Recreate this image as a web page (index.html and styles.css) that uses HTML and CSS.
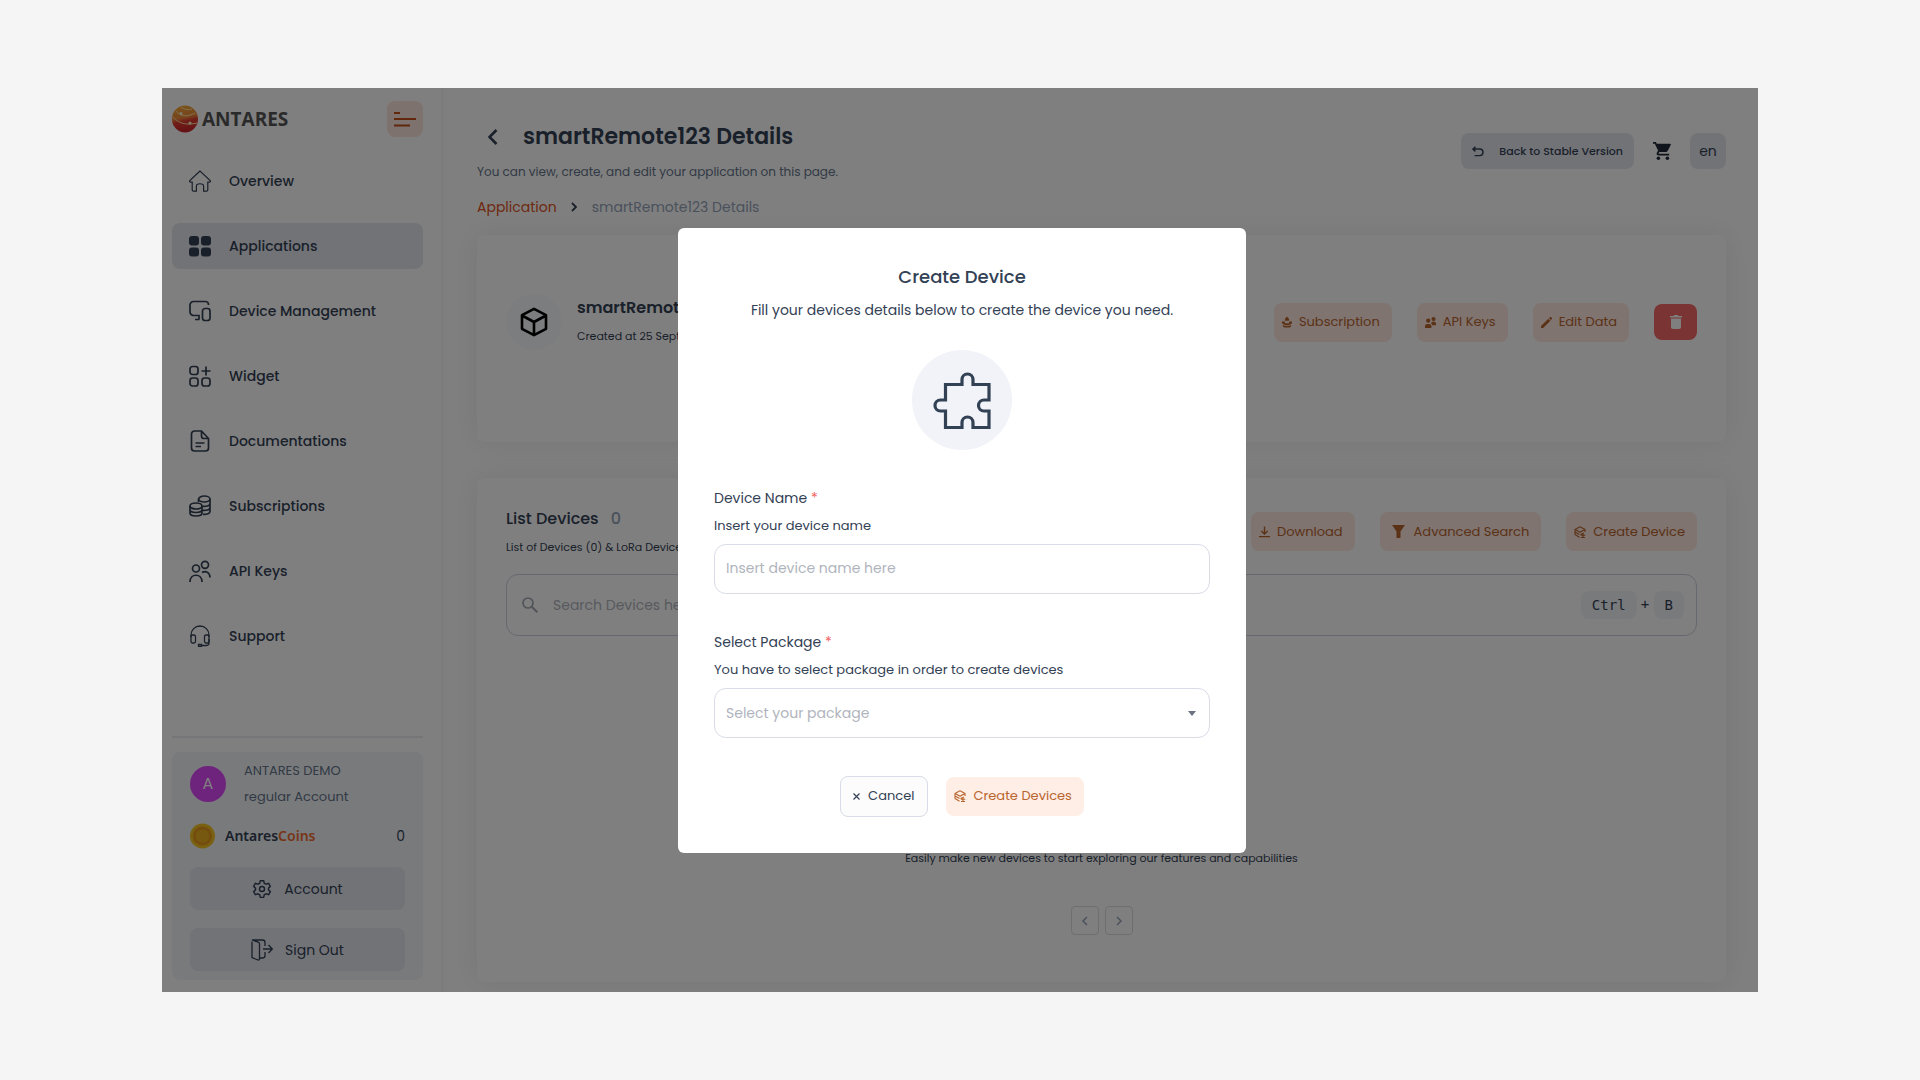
FILE: index.html
```html
<!DOCTYPE html>
<html lang="en">
<head>
    <meta charset="UTF-8">
    <meta name="viewport" content="width=device-width, initial-scale=1.0">
    <title>smartRemote123 Details</title>
    <link rel="stylesheet" href="styles.css">
</head>
<body>
    <!-- shared by both create buttons -->
    <svg width="0" height="0" class="symbols" aria-hidden="true">
        <symbol id="layers" viewBox="0 0 24 24">
            <path fill="none" stroke="currentColor" stroke-width="2.2" stroke-linejoin="round" d="M12 1.500 22 7v5M12 1.500 2 7l10 5.500L22 7M2 7v5l9 5M2 12v5l9 5.500M7 9.500l5 3 5-3M13 17l7-3M18 14v9M13.500 18.500h9M14 23l8 0"/>
        </symbol>
    </svg>

    <div class="app">
        <aside class="sidebar">
            <div class="sidebar-header">
                <div class="brand">
                    <svg width="26" height="28" viewBox="0 0 26 28">
                        <defs>
                            <linearGradient id="sphere" x1="0.300" y1="0" x2="0.500" y2="1">
                                <stop offset="0" stop-color="#f5a834"/>
                                <stop offset="0.450" stop-color="#f08a3c"/>
                                <stop offset="0.600" stop-color="#e03a30"/>
                                <stop offset="1" stop-color="#c8232c"/>
                            </linearGradient>
                        </defs>
                        <ellipse cx="13" cy="14" rx="13" ry="13.500" fill="url(#sphere)"/>
                        <path d="M4 6c5 6 12 6 19 2M1 12c7 8 16 8 24 6M9 2c3 3 8 3 11 2" fill="none" stroke="#ffe3a0" stroke-width="1"/>
                        <circle cx="9" cy="8.500" r="1.600" fill="#fff3c8"/>
                        <circle cx="18" cy="18" r="1.600" fill="#fff3c8"/>
                    </svg>
                    <span>ANTARES</span>
                </div>
                <button class="menu-btn" aria-label="Toggle menu">
                    <svg width="22" height="16" viewBox="0 0 22 16"><path d="M0 2h6M0 8h22M0 14.500h16" stroke="currentColor" stroke-width="2"/></svg>
                </button>
            </div>

            <nav class="nav">
                <a href="#" class="nav-item">
                    <svg width="22" height="22" viewBox="0 0 22 22"><path d="M11 1 .8 10.600c-.5.800 0 1.600 1 1.600h1.400V20c0 .8.400 1.200 1.200 1.200h3V16c0-3 7.200-3 7.200 0v5.200h3c.8 0 1.200-.4 1.200-1.200v-7.800h1.400c1 0 1.500-.8 1-1.600z" stroke-width="1.200"/></svg>
                    Overview
                </a>
                <a href="#" class="nav-item active">
                    <svg width="22" height="22" viewBox="0 0 22 22"><g fill="currentColor" stroke="none"><rect y="1" width="10" height="9.500" rx="3"/><rect x="12" y="1" width="10" height="9.500" rx="3"/><rect y="12.500" width="10" height="9" rx="3"/><rect x="12" y="12.500" width="10" height="9" rx="3"/></g></svg>
                    Applications
                </a>
                <a href="#" class="nav-item">
                    <svg width="22" height="22" viewBox="0 0 22 22"><path d="M19.500 5V4.500a3 3 0 0 0-3-3h-12A3.500 3.500 0 0 0 1 5v7a3.500 3.500 0 0 0 3.500 3.500H10v4M6 19.500h4.500"/><rect x="13.500" y="8.500" width="7.500" height="12" rx="2.500"/></svg>
                    Device Management
                </a>
                <a href="#" class="nav-item">
                    <svg width="22" height="22" viewBox="0 0 22 22"><rect x="1" y="1.500" width="8" height="8" rx="2.500"/><rect x="1" y="13" width="8" height="8" rx="2.500"/><rect x="13" y="13" width="8" height="8" rx="2.500"/><path d="M17 1.500v9M12.500 6h9"/></svg>
                    Widget
                </a>
                <a href="#" class="nav-item">
                    <svg width="22" height="22" viewBox="0 0 22 22"><path d="M12.500 1H5.500A3 3 0 0 0 2.500 4v14a3 3 0 0 0 3 3h11a3 3 0 0 0 3-3V8.500zM12.500 1v5a2.500 2.500 0 0 0 2.500 2.500h4.500M6.500 13h9M6.500 16.500h5.500"/></svg>
                    Documentations
                </a>
                <a href="#" class="nav-item">
                    <svg width="22" height="22" viewBox="0 0 22 22"><ellipse cx="7" cy="11" rx="6" ry="3"/><path d="M1 11v7c0 4 12 4 12 0v-7M1 14.500c0 4 12 4 12 0M9.500 7V4M21 4v12.500c0 2-3 3-7 2.800M21 8.500c0 2.500-4 3.300-8 2.800M21 12.500c0 2.500-4 3.300-8 2.800"/><ellipse cx="15.300" cy="4" rx="5.700" ry="3"/></svg>
                    Subscriptions
                </a>
                <a href="#" class="nav-item">
                    <svg width="22" height="22" viewBox="0 0 22 22"><circle cx="7" cy="8.500" r="3.500"/><circle cx="16" cy="4.800" r="3.500"/><path d="M1 22c0-9 12-9 12 0M13 12.500c4-2.500 8 .5 8 5"/></svg>
                    API Keys
                </a>
                <a href="#" class="nav-item">
                    <svg width="22" height="22" viewBox="0 0 22 22"><path d="M2 12v-2a9 9 0 0 1 18 0v2M20 14v4c0 1.500-1 2.500-3 2.500h-4M9.500 19.500h3v2h-3z" stroke-width="1.300"/><rect x="2" y="10" width="4.500" height="8" rx="1.500" stroke-width="1.300"/><rect x="15.500" y="10" width="4.500" height="8" rx="1.500" stroke-width="1.300"/></svg>
                    Support
                </a>
            </nav>

            <div class="account-box">
                <div class="user">
                    <div class="avatar">A</div>
                    <div class="user-info">
                        <span>ANTARES DEMO</span>
                        <span>regular Account</span>
                    </div>
                </div>
                <div class="coins">
                    <svg width="25" height="26" viewBox="0 0 25 26"><circle cx="12.500" cy="13" r="12.500" fill="#f5c324"/><circle cx="12.500" cy="13" r="9.500" fill="#e8981c"/><circle cx="12.500" cy="13" r="6.800" fill="#eeb022"/></svg>
                    <span class="coins-name">Antares<em>Coins</em></span>
                    <span>0</span>
                </div>
                <button class="side-btn">
                    <svg width="20" height="20" viewBox="0 0 24 24"><circle cx="12" cy="12" r="3"/><path d="M10 2h4l.7 3 2.300 1.300 3-1 2 3.500L19.800 11v2l2.200 2.200-2 3.500-3-1-2.300 1.300-.7 3h-4l-.7-3L7 17.700l-3 1-2-3.500L4.200 13v-2L2 8.800l2-3.500 3 1L9.300 5z"/></svg>
                    Account
                </button>
                <button class="side-btn">
                    <svg width="22" height="22" viewBox="0 0 22 22"><path d="M1 2.500v16l6 2.500c1 .3 1.500-.3 1.500-1.200V5c0-1-.5-1.500-1.200-1.800L1 1h10.500C13 1 14 2 14 3.500V7M14 13v3.500c0 1.500-1 2.500-2.500 2.500H9M12 10h9M17.500 6l3.800 4-3.800 4" stroke-width="1.300"/></svg>
                    Sign Out
                </button>
            </div>
        </aside>

        <main class="main">
            <header class="page-header">
                <div>
                    <div class="title-row">
                        <button class="back-btn" aria-label="Back">
                            <svg width="10" height="16" viewBox="0 0 10 16"><path d="M8.500 1 1.500 8l7 7" fill="none" stroke="currentColor" stroke-width="2.600"/></svg>
                        </button>
                        <h1>smartRemote123 Details</h1>
                    </div>
                    <p class="subtitle">You can view, create, and edit your application on this page.</p>
                    <div class="breadcrumb">
                        <a href="#">Application</a>
                        <svg width="7" height="10" viewBox="0 0 7 10"><path d="m1 1 4 4-4 4" fill="none" stroke="currentColor" stroke-width="1.800"/></svg>
                        <span>smartRemote123 Details</span>
                    </div>
                </div>
                <div class="header-actions">
                    <button class="stable-btn">
                        <svg width="12" height="11" viewBox="0 0 14 12"><path d="M4 .5 1 3.200l3 2.700M1.500 3.200H9a3.700 3.700 0 0 1 0 7.600H3" fill="none" stroke="currentColor" stroke-width="1.700"/></svg>
                        Back to Stable Version
                    </button>
                    <button class="cart-btn" aria-label="Cart">
                        <svg width="18" height="20" viewBox="0 0 20 20" fill="currentColor"><path d="M0 0h3.200l1 2H19c.8 0 1.100.700.700 1.300L16.200 10c-.4.700-.9 1-1.700 1H7l-1 2h12v2H6c-1.500 0-2.500-1.500-1.700-3l1.300-2.500L2 2H0z"/><circle cx="6" cy="18" r="2"/><circle cx="16" cy="18" r="2"/></svg>
                    </button>
                    <button class="lang-btn">en</button>
                </div>
            </header>

            <section class="card app-card">
                <div class="app-icon">
                    <svg width="28" height="30" viewBox="0 0 28 30"><path d="M14 1.800 26 8.200v13.600L14 28.200 2 21.800V8.200zM2 8.500l12 6.500 12-6.500M14 15v13" fill="none" stroke="currentColor" stroke-width="2.600" stroke-linejoin="round"/></svg>
                </div>
                <div class="app-text">
                    <h2>smartRemote123</h2>
                    <p>Created at 25 September 2023</p>
                </div>
                <div class="actions">
                    <button class="btn-soft">
                        <svg width="10" height="12" viewBox="0 0 12 13" fill="currentColor"><path d="M6 0 3.500 3v2h5V3zM0 6h3.500v2h5V6H12v2L9 10H3L0 8zM1 10l2 1h6l2-1v2l-2 1H3l-2-1z"/></svg>
                        Subscription
                    </button>
                    <button class="btn-soft">
                        <svg width="11" height="11" viewBox="0 0 12 12" fill="currentColor"><circle cx="3.500" cy="4" r="2.300"/><circle cx="9.300" cy="2.300" r="2.200"/><path d="M0 12V9.500C0 7 7 7 7 9.500V12zM6.500 6.500C8 4.500 12 5 12 7v2H8z"/></svg>
                        API Keys
                    </button>
                    <button class="btn-soft">
                        <svg width="11" height="11" viewBox="0 0 12 12" fill="currentColor"><path d="M0 12V9.700L8 1.800 10.200 4 2.300 12zM8.700 1.200 9.600.3c.5-.4 1-.4 1.500 0l.6.600c.4.500.4 1 0 1.500l-.9.900z"/></svg>
                        Edit Data
                    </button>
                    <button class="btn-delete" aria-label="Delete">
                        <svg width="12" height="14" viewBox="0 0 12 14" fill="currentColor"><path d="M0 1h3.500l.7-1h3.600l.7 1H12v1.500H0zM1 3.500h10V12c0 1.300-.7 2-2 2H3c-1.300 0-2-.7-2-2z"/></svg>
                    </button>
                </div>
            </section>

            <section class="card list-card">
                <div class="list-header">
                    <div>
                        <h2>List Devices <span>0</span></h2>
                        <p>List of Devices (0) &amp; LoRa Devices (0)</p>
                    </div>
                    <div class="actions">
                        <button class="btn-soft">
                            <svg width="11" height="12" viewBox="0 0 12 12"><path d="M6 0v8M2.500 5 6 8.300 9.500 5M0 11h12" fill="none" stroke="currentColor" stroke-width="1.500"/></svg>
                            Download
                        </button>
                        <button class="btn-soft btn-filter">
                            <svg width="13" height="13" viewBox="0 0 13 13" fill="currentColor"><path d="M0 0h13L8.500 6.500V13h-4V6.500z"/></svg>
                            Advanced Search
                        </button>
                        <button class="btn-soft">
                            <svg width="12" height="12"><use href="#layers"/></svg>
                            Create Device
                        </button>
                    </div>
                </div>
                <div class="search">
                    <svg width="16" height="16" viewBox="0 0 16 16"><circle cx="6" cy="6" r="5" fill="none" stroke="currentColor" stroke-width="1.700"/><path d="m9.800 9.800 5.500 5.500" stroke="currentColor" stroke-width="2"/></svg>
                    <input type="text" placeholder="Search Devices here" aria-label="Search devices">
                    <kbd>Ctrl</kbd><span>+</span><kbd>B</kbd>
                </div>
                <p class="empty">Easily make new devices to start exploring our features and capabilities</p>
                <div class="pager">
                    <button aria-label="Previous page"><svg width="6" height="10" viewBox="0 0 6 10"><path d="M5 1 1 5l4 4" fill="none" stroke="currentColor" stroke-width="1.500"/></svg></button>
                    <button aria-label="Next page"><svg width="6" height="10" viewBox="0 0 6 10"><path d="m1 1 4 4-4 4" fill="none" stroke="currentColor" stroke-width="1.500"/></svg></button>
                </div>
            </section>
        </main>

        <div class="overlay">
            <form class="modal" role="dialog" aria-labelledby="modalTitle">
                <h2 id="modalTitle">Create Device</h2>
                <p class="modal-text">Fill your devices details below to create the device you need.</p>
                <div class="modal-icon">
                    <svg width="58" height="58" viewBox="0 0 58 58"><path d="M12.500 13.500H29v-5a5.500 5.500 0 0 1 11 0v5h16V29h-5a5.500 5.500 0 0 0 0 11h5v16.500H40v-5a5.500 5.500 0 0 0-11 0v5H12.500V40h-5a5.500 5.500 0 0 1 0-11h5z" fill="none" stroke="currentColor" stroke-width="3.200"/></svg>
                </div>
                <div class="form-group">
                    <label for="deviceName">Device Name <span>*</span></label>
                    <p>Insert your device name</p>
                    <input type="text" id="deviceName" placeholder="Insert device name here">
                </div>
                <div class="form-group">
                    <label for="package">Select Package <span>*</span></label>
                    <p>You have to select package in order to create devices</p>
                    <div class="select-wrap">
                        <select id="package">
                            <option>Select your package</option>
                        </select>
                        <svg width="8" height="5" viewBox="0 0 8 5"><path d="M0 0h8L4 5z" fill="currentColor"/></svg>
                    </div>
                </div>
                <div class="modal-buttons">
                    <button type="button" class="btn-cancel">
                        <svg width="7" height="7" viewBox="0 0 7 7"><path d="m.5.500 6 6m0-6-6 6" stroke="currentColor" stroke-width="1.200"/></svg>
                        Cancel
                    </button>
                    <button type="submit" class="btn-soft">
                        <svg width="12" height="12"><use href="#layers"/></svg>
                        Create Devices
                    </button>
                </div>
            </form>
        </div>
    </div>
</body>
</html>
```
FILE: styles.css
```css
* {
    box-sizing: border-box;
}
body {
    margin: 0;
    padding: 88px 162px;
    background-color: #f5f5f5;
    color: #334155;
    font-family: Poppins, Inter, sans-serif;
    font-size: 14px;
    line-height: 20px;
}
h1, h2, p {
    margin: 0;
}
button, input, select {
    font: inherit;
    color: inherit;
}
button {
    display: inline-flex;
    align-items: center;
    justify-content: center;
    padding: 0;
    border: none;
    border-radius: 8px;
    background: none;
    cursor: pointer;
}
svg {
    flex: none;
}
a {
    color: inherit;
    text-decoration: none;
}
.symbols {
    position: absolute;
}
.app {
    position: relative;
    display: flex;
    min-height: calc(100vh - 176px);
    background-color: #fff;
    overflow: hidden;
}

/* sidebar */
.sidebar {
    display: flex;
    flex-direction: column;
    width: 280px;
    flex: none;
    padding: 13px 18px 12px 10px;
    border-right: 1px solid #f4f4f5;
    box-shadow: 0 0 10px rgba(0, 0, 0, 0.05);
}
.sidebar-header {
    display: flex;
    align-items: center;
    justify-content: space-between;
    height: 36px;
}
.brand {
    display: flex;
    align-items: center;
    gap: 4px;
    color: #555;
    font-family: "Open Sans", sans-serif;
    font-size: 19px;
    font-weight: 700;
}
.menu-btn {
    width: 36px;
    height: 36px;
    background-color: #fde4dc;
    color: #c2501c;
}
.nav {
    display: flex;
    flex-direction: column;
    gap: 19px;
    margin-top: 21px;
}
.nav-item {
    display: flex;
    align-items: center;
    gap: 18px;
    height: 46px;
    padding: 0 17px;
    border-radius: 8px;
    font-weight: 500;
}
.nav-item svg, .side-btn svg {
    fill: none;
    stroke: currentColor;
    stroke-width: 1.7;
}
.nav-item.active {
    background-color: #e4e6ef;
}
.account-box {
    display: flex;
    flex-direction: column;
    position: relative;
    margin-top: auto;
    padding: 12px 18px 9px;
    border-radius: 8px;
    background-color: #f3f5f9;
}
.account-box::before {
    content: "";
    position: absolute;
    top: -16px;
    left: 0;
    right: 0;
    height: 2px;
    background-color: #ececf0;
}
.user {
    display: flex;
    gap: 18px;
    align-items: center;
    height: 39px;
    color: #64748b;
    font-size: 13px;
}
.avatar {
    width: 36px;
    height: 36px;
    border-radius: 50%;
    background-color: #dd46fb;
    color: #fff;
    font-size: 16px;
    line-height: 36px;
    text-align: center;
}
.user-info {
    display: flex;
    flex-direction: column;
    gap: 6px;
}
.coins {
    display: flex;
    align-items: center;
    height: 26px;
    margin: 20px 0 18px;
}
.coins-name {
    margin: 0 auto 0 10px;
    font-family: "Noto Sans", sans-serif;
    font-weight: 600;
}
.coins-name em {
    color: #ef6c30;
    font-style: normal;
}
.side-btn {
    gap: 12px;
    height: 43px;
    background-color: #e4e6ef;
}
.side-btn + .side-btn {
    margin-top: 18px;
}

/* main column */
.main {
    display: flex;
    flex-direction: column;
    flex: 1;
    min-width: 0;
    padding: 37px 32px 10px 35px;
}
.page-header {
    display: flex;
    justify-content: space-between;
    align-items: flex-start;
    padding-bottom: 18px;
}
.title-row {
    display: flex;
    align-items: center;
    gap: 14px;
}
.back-btn {
    width: 32px;
    height: 24px;
}
h1 {
    font-size: 22px;
    font-weight: 600;
    line-height: 24px;
}
.subtitle {
    margin-top: 13px;
    color: #64748b;
    font-size: 12px;
}
.breadcrumb {
    display: flex;
    align-items: center;
    gap: 14px;
    margin-top: 15px;
}
.breadcrumb a {
    color: #e0521c;
}
.breadcrumb span {
    color: #94a3b8;
}
.header-actions {
    display: flex;
    align-items: center;
    padding-top: 8px;
}
.stable-btn {
    gap: 15px;
    height: 36px;
    padding: 0 11px;
    background-color: #e4e6ef;
    font-size: 11px;
    font-weight: 500;
}
.cart-btn {
    margin: 0 19px;
    color: #1e293b;
}
.lang-btn {
    width: 36px;
    height: 36px;
    background-color: #e4e6ef;
}
.card {
    border-radius: 8px;
    background-color: #fff;
    box-shadow: 0 0 30px rgba(0, 0, 0, 0.08);
}
.card h2 {
    font-size: 16px;
    font-weight: 600;
}
.card p {
    font-size: 11px;
}
.app-card {
    display: flex;
    align-items: center;
    gap: 15px;
    margin-bottom: 36px;
    padding: 59px 29px 92px;
}
.app-icon {
    display: flex;
    align-items: center;
    justify-content: center;
    width: 56px;
    height: 56px;
    border-radius: 50%;
    background-color: #f8fafc;
    color: #000;
}
.app-text {
    display: flex;
    flex-direction: column;
    gap: 8px;
}
.actions {
    display: flex;
    align-items: center;
    gap: 25px;
    margin-left: auto;
}
.btn-soft {
    gap: 7px;
    height: 39px;
    padding: 0 12px 0 8px;
    background-color: #feeee6;
    color: #b9652f;
    font-size: 13px;
}
.card .btn-soft {
    background-color: #fee8e0;
}
.btn-filter {
    gap: 9px;
    padding-left: 12px;
}
.btn-delete {
    width: 43px;
    height: 36px;
    background-color: #f66868;
    color: #fff;
}
.list-card {
    display: flex;
    flex-direction: column;
    flex: 1;
    padding: 31px 29px 47px;
}
.list-header {
    display: flex;
    align-items: flex-start;
    justify-content: space-between;
}
.list-header .actions {
    padding-top: 3px;
}
.list-header h2 {
    font-weight: 500;
}
.list-header h2 span {
    margin-left: 8px;
    color: #94a3b8;
}
.list-header p {
    margin-top: 8px;
}
.search {
    display: flex;
    align-items: center;
    height: 62px;
    margin-top: 17px;
    padding: 0 12px 0 15px;
    border: 1px solid #cbd0dc;
    border-radius: 12px;
}
.search svg {
    color: #a3a8b2;
}
.search input {
    flex: 1;
    margin-left: 15px;
    padding: 0;
    border: none;
    background: none;
}
::placeholder {
    color: #b0b4bd;
    opacity: 1;
}
kbd {
    padding: 4px 11px;
    border-radius: 8px;
    background-color: #f1f4f9;
    font-family: "DejaVu Sans Mono", monospace;
    font-size: 14px;
}
.search span {
    width: 17px;
    text-align: center;
}
.empty {
    margin-top: auto;
    text-align: center;
}
.pager {
    display: flex;
    justify-content: center;
    gap: 6px;
    margin-top: 38px;
}
.pager button {
    width: 28px;
    height: 29px;
    border: 1px solid #dcdde0;
    border-radius: 4px;
    color: #94a3b8;
}

/* create device modal */
.overlay {
    position: absolute;
    inset: 0;
    display: flex;
    align-items: center;
    justify-content: center;
    padding-left: 4px;
    background-color: rgba(0, 0, 0, 0.5);
}
.modal {
    display: flex;
    flex-direction: column;
    align-items: center;
    width: 568px;
    padding: 36px;
    border-radius: 6px;
    background-color: #fff;
}
.modal h2 {
    font-size: 18px;
    font-weight: 500;
    line-height: 26px;
}
.modal-text {
    margin-top: 10px;
}
.modal-icon {
    display: flex;
    align-items: center;
    justify-content: center;
    width: 100px;
    height: 100px;
    margin-top: 30px;
    border-radius: 50%;
    background-color: #f1f3f8;
}
.form-group {
    width: 100%;
    margin-top: 38px;
}
.form-group label span {
    color: #f56565;
}
.form-group p {
    margin: 8px 0;
    font-size: 13px;
}
.form-group input, .form-group select {
    display: block;
    width: 100%;
    height: 50px;
    padding: 0 11px;
    border: 1px solid #d9dbe6;
    border-radius: 12px;
    background-color: #fff;
}
.form-group select {
    appearance: none;
    color: #b0b4bd;
}
.select-wrap {
    position: relative;
}
.select-wrap svg {
    position: absolute;
    top: 23px;
    right: 14px;
    color: #6b7280;
}
.modal-buttons {
    display: flex;
    align-items: center;
    gap: 18px;
    margin-top: 38px;
}
.btn-cancel {
    gap: 8px;
    height: 41px;
    padding: 0 13px 0 12px;
    border: 1px solid #d9dbe6;
    background-color: #fcfcfd;
    font-size: 13px;
}
```
